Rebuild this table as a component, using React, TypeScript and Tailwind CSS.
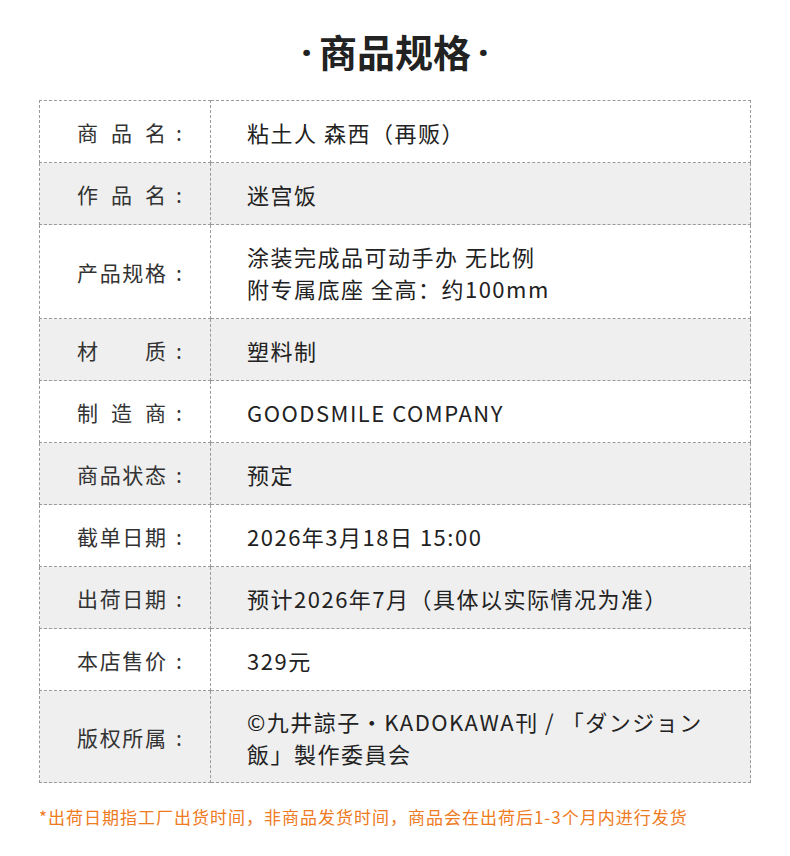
const rows: { label: string; value: React.ReactNode }[] = [
  { label: '商品名', value: '粘土人 森西（再贩）' },
  { label: '作品名', value: '迷宫饭' },
  {
    label: '产品规格',
    value: (
      <>
        涂装完成品可动手办 无比例
        <br />
        附专属底座 全高：约100mm
      </>
    ),
  },
  { label: '材质', value: '塑料制' },
  { label: '制造商', value: 'GOODSMILE COMPANY' },
  { label: '商品状态', value: '预定' },
  { label: '截单日期', value: '2026年3月18日 15:00' },
  { label: '出荷日期', value: '预计2026年7月（具体以实际情况为准）' },
  { label: '本店售价', value: '329元' },
  { label: '版权所属', value: '©九井諒子・KADOKAWA刊 / 「ダンジョン飯」製作委員会' },
];

export default function App() {
  return (
    <div
      className="w-[790px] h-[856px] bg-white pt-[25px]"
      style={{ fontFamily: '"Noto Sans CJK SC", "Noto Sans", sans-serif' }}
    >
      <h1 className="flex items-center justify-center text-[38px] leading-[52px] font-bold text-[#222]">
        <span className="mr-[7px] [font-family:'Noto_Sans',sans-serif]">·</span>
        商品规格
        <span className="ml-[7px] [font-family:'Noto_Sans',sans-serif]">·</span>
      </h1>

      <table className="mt-[23px] ml-[39px] w-[712px] border-collapse border border-dashed border-[#9a9a9a]">
        <tbody>
          {rows.map((r, i) => {
            const last = i === rows.length - 1;
            return (
              <tr key={r.label} className={i % 2 === 1 ? 'bg-[#efefef]' : 'bg-white'}>
                <td
                  className={`w-[171px] border border-dashed border-[#9a9a9a] pl-[37px] align-middle ${
                    last ? 'pt-[14px] pb-[13px]' : 'pt-[15px] pb-[14px]'
                  }`}
                >
                  <div className="flex items-center text-[21px] leading-[32px] text-[#333]">
                    <span className="w-[89px] [text-align-last:justify]">{r.label}</span>
                    <span className="ml-[10px]">:</span>
                  </div>
                </td>
                <td
                  className={`border border-dashed border-[#9a9a9a] pl-[36px] pr-[28px] text-[22px] leading-[32px] tracking-[1.5px] text-[#222] ${
                    last ? 'pt-[14px] pb-[13px]' : 'pt-[15px] pb-[14px]'
                  }`}
                >
                  {r.value}
                </td>
              </tr>
            );
          })}
        </tbody>
      </table>

      <p className="mt-[22px] ml-[39px] text-[17px] leading-[24px] tracking-[1px] text-[#ee7b22]">
        *出荷日期指工厂出货时间，非商品发货时间，商品会在出荷后1-3个月内进行发货
      </p>
    </div>
  );
}
